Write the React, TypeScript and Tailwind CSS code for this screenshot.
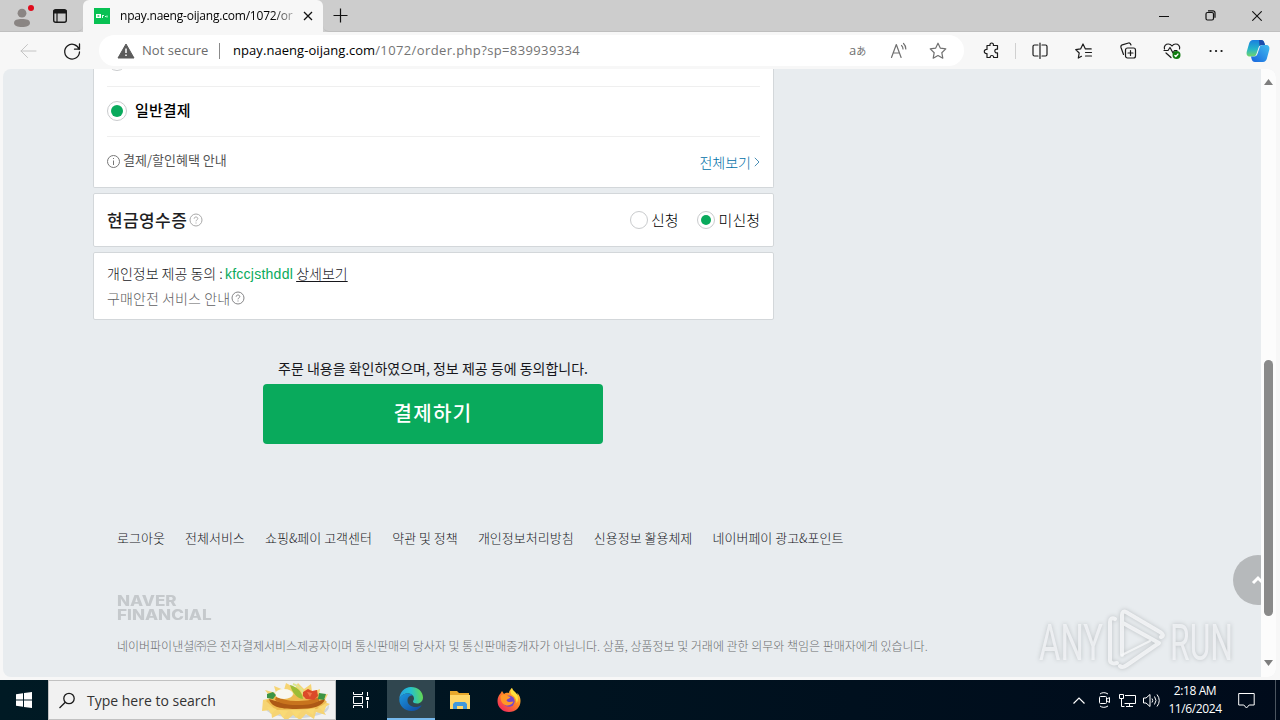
import type { ReactNode } from 'react';
import clsx from 'clsx';

const FOOTER_LINKS = [
  '로그아웃',
  '전체서비스',
  '쇼핑&페이 고객센터',
  '약관 및 정책',
  '개인정보처리방침',
  '신용정보 활용체제',
  '네이버페이 광고&포인트',
];

interface IconProps {
  children: ReactNode;
  className?: string;
  size?: number;
}

// 20-unit line icon, used by the browser chrome and the taskbar
function Icon({ children, className, size = 20 }: IconProps) {
  return (
    <svg
      width={size}
      height={size}
      viewBox="0 0 20 20"
      fill="none"
      stroke="currentColor"
      strokeWidth="1.2"
      strokeLinecap="round"
      strokeLinejoin="round"
      className={clsx('shrink-0', className)}
    >
      {children}
    </svg>
  );
}

function TabStrip() {
  return (
    <div className="flex h-8 bg-[#cdcdcd]">
      <div className="flex w-[83px] items-center rounded-br-md border-b border-[#bfbfbf] pl-3">
        <svg width="22" height="26" viewBox="0 0 22 26" className="shrink-0">
          <circle cx="10" cy="10.200" r="4.400" fill="#8a8583" />
          <path d="M2 20c0-3.200 3.500-4 8-4s8 .8 8 4c0 2.600-3.500 4-8 4s-8-1.400-8-4z" fill="#8a8583" />
          <circle cx="19" cy="5" r="3" fill="#e00b1c" />
        </svg>
        <Icon className="ml-4 text-[#1b1b1b]">
          <rect x="3.700" y="3.700" width="12.600" height="12.600" rx="2" strokeWidth="1.400" />
          <path d="M4 4.500h12v2.500H4z" fill="currentColor" />
          <path d="M7 7v9" />
        </Icon>
      </div>
      <div className="flex w-[240px] items-center rounded-t-md bg-[#f7f7f7] pl-[11px]">
        <div className="flex h-4 w-4 items-center justify-center bg-[#08c153]">
          <svg width="14" height="8" viewBox="0 0 14 8">
            <path d="M1 2h5v4H1z" fill="#fff" />
            <path d="M2.500 3.300h1.800v1.400H2.500z" fill="#08c153" />
            <path d="M7.500 3v3M7.500 3.500h1.500M10 4.500h1.200M12 3.500v2" stroke="#d8ffe6" />
          </svg>
        </div>
        <div className="ml-[10px] w-[173px] overflow-hidden whitespace-nowrap bg-gradient-to-r from-black from-88% to-black/30 bg-clip-text text-[12px] tracking-[-0.21px] text-transparent">
          npay.naeng-oijang.com/1072/or
        </div>
        <svg width="10" height="10" viewBox="0 0 10 10" className="ml-[10px]" stroke="#111" strokeWidth="1.300">
          <path d="M1 1l8 8M9 1l-8 8" />
        </svg>
      </div>
      <div className="flex flex-1 items-center rounded-bl-md border-b border-[#bfbfbf] pl-[10px]">
        <svg width="15" height="15" viewBox="0 0 15 15" stroke="#111" strokeWidth="1.200">
          <path d="M7.500 .5v14M.5 7.500h14" />
        </svg>
        <div className="ml-auto flex w-[121px] items-center justify-between pr-[18px]">
          <svg width="10" height="10" viewBox="0 0 10 10" stroke="#111">
            <path d="M0 5.500h10" />
          </svg>
          <svg width="11" height="11" viewBox="0 0 11 11" fill="none" stroke="#111" strokeWidth="1.200">
            <rect x="1" y="2.500" width="7.500" height="7.500" rx="1.500" />
            <path d="M3 .8h5a2 2 0 0 1 2 2v5" />
          </svg>
          <svg width="10" height="10" viewBox="0 0 10 10" stroke="#111" strokeWidth="1.100">
            <path d="M.3 .3l9.400 9.400M9.700 .3L.3 9.700" />
          </svg>
        </div>
      </div>
    </div>
  );
}

function CopilotIcon() {
  return (
    <svg width="24" height="22" viewBox="0 0 24 22" className="ml-5 shrink-0">
      <defs>
        <linearGradient id="copLeft" x1="0" y1="0" x2="0" y2="1">
          <stop offset="0" stopColor="#1a7fe0" />
          <stop offset=".55" stopColor="#25b5c9" />
          <stop offset="1" stopColor="#72d66a" />
        </linearGradient>
        <linearGradient id="copRight" x1="1" y1="0" x2="0" y2="1">
          <stop offset="0" stopColor="#41bdf0" />
          <stop offset="1" stopColor="#1763dd" />
        </linearGradient>
      </defs>
      <path d="M7 0h8c2 0 2.800 1 3.400 3l.6 2h-3c-2 0-3 1-3.600 3l-2 6c-.6 1.800-1.600 2.500-3.400 2.500H4C1.300 16.500 0 14.500 .8 11.500l2.300-8C3.800 1.200 5 0 7 0z" fill="url(#copLeft)" />
      <path d="M17 22H9c-2 0-2.800-1-3.400-3L5 16.500h3c2 0 3-1 3.600-3l2-6C14.200 5.700 15.200 5 17 5h3c2.700 0 4 2 3.200 5l-2.300 8.500c-.7 2.300-1.900 3.500-3.900 3.500z" fill="url(#copRight)" />
      <path d="M13 0h2c2 0 2.800 1 3.400 3l.6 2h-3c-1 0-1.800.3-2.500 1z" fill="#1c4bab" />
    </svg>
  );
}

function Toolbar() {
  return (
    <div className="flex h-[37px] items-center pl-[18px]">
      <Icon className="text-[#c4c4c4]">
        <path d="M18 10H3M9.500 3.500L3 10l6.500 6.500" strokeWidth="1" />
      </Icon>
      <Icon className="ml-6 text-[#1b1b1b]">
        <path d="M17.200 8.500A7.400 7.400 0 1 0 17.500 11M17.500 3v5.200h-5" strokeWidth="1.300" />
      </Icon>
      <div className="ml-[17px] flex h-[31px] w-[865px] items-center rounded-full bg-white pl-[18px] text-[13px]">
        <svg width="18" height="16" viewBox="0 0 18 16">
          <path d="M9 1l8 14H1z" fill="#5b5b5b" stroke="#5b5b5b" strokeLinejoin="round" />
          <path d="M9 5.500v4.500M9 11.500v1.500" stroke="#fff" strokeWidth="1.500" />
        </svg>
        <span className="ml-[7px] w-[67px] whitespace-nowrap tracking-[0.05px] text-[#6b6b6b]">Not secure</span>
        <span className="ml-[10px] h-4 w-px bg-[#8a8a8a]" />
        <span className="ml-[13px] whitespace-nowrap text-[#747474]">
          <span className="tracking-[0.06px] text-black">npay.naeng-oijang.com</span>
          <span className="tracking-[0.38px]">/1072/order.php?sp=839939334</span>
        </span>
        <div className="ml-auto flex items-center pr-[16px] text-[#707070]">
          <span className="w-[20px] whitespace-nowrap text-[13px] leading-none">
            a<span className="text-[10px]">あ</span>
          </span>
          <Icon className="ml-[20px]">
            <path d="M2.500 16.500l4.800-13 4.800 13M4.200 12h6.200" />
            <path d="M12.500 4.500c1 .8 1.500 2 1.500 3.500M14.500 2.500c1.600 1.500 2.300 3.300 2.300 5.500" />
          </Icon>
          <Icon className="ml-[19px]">
            <path d="M10 2.200l2.400 5 5.400.7-4 3.800 1 5.500-4.800-2.700-4.800 2.700 1-5.500-4-3.800 5.400-.7z" />
          </Icon>
        </div>
      </div>
      <div className="flex items-center text-[#1b1b1b]">
        <Icon className="ml-[18px]">
          <path d="M5 4.500h3c-.3-1.800.6-2.500 1.700-2.500s2 .7 1.700 2.500h4.100v3.700c-1.800-.3-2.700.6-2.700 1.800s.9 2.100 2.700 1.800v4.700h-3.800c0-1.400-.7-2-1.800-2s-1.800.6-1.800 2H5v-4c-1.800.2-2.700-.7-2.700-2s.9-2.200 2.700-2z" />
        </Icon>
        <span className="ml-[13px] h-4 w-px bg-[#d0d0d0]" />
        <Icon className="ml-[14px]">
          <path d="M8 4H4.500A1.500 1.500 0 0 0 3 5.500v8A1.500 1.500 0 0 0 4.500 15H8M12 4h3.500A1.500 1.500 0 0 1 17 5.500v8a1.500 1.500 0 0 1-1.500 1.500H12M10 2v15.500" />
        </Icon>
        <Icon className="ml-6">
          <path d="M7.500 15.300L4.300 17l.9-5-3.500-3.400 4.900-.7L9 3l2.400 4.900h5.800M11.500 11.500h6M11.500 15h6" />
        </Icon>
        <Icon className="ml-6">
          <rect x="7.500" y="7" width="10" height="10" rx="2" />
          <path d="M12.500 9.500v5M10 12h5M5.500 13.500L3 6.500C2.600 5 3 4.300 4.300 3.800L10.500 2c1.300-.3 2 .2 2.500 2" />
        </Icon>
        <Icon className="ml-6">
          <path d="M2.500 8C1.500 4.800 4 3 6.300 3c1.700 0 3 1 3.700 2 .7-1 2-2 3.700-2 2.300 0 4.800 1.800 3.800 5M2 9.500h4l2-3 3 5.500 1.500-2.500H15M4 12l5 4.500" />
          <circle cx="14.500" cy="14" r="4" fill="#107c10" stroke="none" />
          <path d="M12.800 14.500l1 1 2.200-2.500" stroke="#fff" />
        </Icon>
        <Icon className="ml-6">
          <path d="M4.500 10h.1M10 10h.1M15.500 10h.1" strokeWidth="2.200" />
        </Icon>
        <CopilotIcon />
      </div>
    </div>
  );
}

function Radio({ checked, large }: { checked?: boolean; large?: boolean }) {
  return (
    <span
      className={clsx(
        'flex shrink-0 items-center justify-center rounded-full border border-[#c9cbcd] bg-white',
        large ? 'h-5 w-5' : 'h-[18px] w-[18px]',
      )}
    >
      {checked && <span className={clsx('rounded-full bg-[#09aa5c]', large ? 'h-3 w-3' : 'h-[10px] w-[10px]')} />}
    </span>
  );
}

function HelpIcon({ className }: { className?: string }) {
  return (
    <svg width="14" height="14" viewBox="0 0 14 14" fill="none" className={clsx('shrink-0', className)} stroke="currentColor">
      <circle cx="7" cy="7" r="6" />
      <path d="M5.200 5.700C5.200 4.500 6 4 7 4s1.800.6 1.800 1.600C8.800 6.800 7 6.900 7 8.300M7 9.500v1" />
    </svg>
  );
}

function PaymentCard() {
  return (
    <section className="h-[119px] rounded-b-[2px] border border-t-0 border-[#d3d7da] bg-white px-[13px]">
      <div className="h-[18px] overflow-hidden border-b border-[#efefef]">
        <div className="-mt-[18px]">
          <Radio large />
        </div>
      </div>
      <div className="flex h-[50px] items-center border-b border-[#efefef] pb-[2px]">
        <Radio checked large />
        <span className="ml-2 text-[15px] font-medium tracking-[0.1px] text-black">일반결제</span>
      </div>
      <div className="flex h-[49px] items-center pb-[2px]">
        <svg width="13" height="13" viewBox="0 0 13 13" fill="none" stroke="#777" className="mt-px">
          <circle cx="6.500" cy="6.500" r="6" />
          <path d="M6.500 5.500v4.500M6.500 3v1" />
        </svg>
        <span className="-mt-px ml-[3px] text-[13px] text-[#555]">결제/할인혜택 안내</span>
        <span className="ml-auto mt-[3px] text-[14px] font-light text-[#0070a8]">전체보기</span>
        <svg width="6" height="10" viewBox="0 0 6 10" fill="none" stroke="#4c8fb5" className="ml-[3px] mt-[2px]">
          <path d="M.8 .8L5 5 .8 9.200" />
        </svg>
      </div>
    </section>
  );
}

function ReceiptCard() {
  return (
    <section className="mt-[5px] flex h-[54px] items-center rounded-[2px] border border-[#d3d7da] bg-white px-[13px]">
      <h2 className="text-[17px] font-medium tracking-[0.4px] text-[#1e1e23]">현금영수증</h2>
      <HelpIcon className="ml-[2px] text-[#a9a9a9]" />
      <div className="ml-auto flex items-center text-[15px] font-light text-black">
        <Radio />
        <span className="ml-[3px]">신청</span>
        <span className="ml-[18px]">
          <Radio checked />
        </span>
        <span className="ml-1">미신청</span>
      </div>
    </section>
  );
}

function ConsentCard() {
  return (
    <section className="mt-[5px] h-[68px] rounded-[2px] border border-[#d3d7da] bg-white px-[13px] pt-[8px] text-[14px] font-light leading-6">
      <p className="whitespace-nowrap text-[#17171c]">
        개인정보 제공 동의 : <span className="-ml-px font-['Liberation_Sans'] tracking-[0.25px] text-[#09aa5c]">kfccjsthddl</span>{' '}
        <span className="underline underline-offset-2">상세보기</span>
      </p>
      <p className="flex items-center tracking-[0.1px] text-[#606062]">
        구매안전 서비스 안내
        <HelpIcon className="ml-px text-[#858587]" />
      </p>
    </section>
  );
}

function Watermark() {
  return (
    <svg width="200" height="68" viewBox="0 0 200 68" className="absolute bottom-[2px] right-[40px] drop-shadow-[0_0_2px_#aeb3b6]">
      <g fill="#f5f7f9" fillOpacity=".75" fontFamily="Roboto" fontSize="50">
        <text x="3" y="53" textLength="64" lengthAdjust="spacingAndGlyphs">ANY</text>
        <text x="134" y="53" textLength="63" lengthAdjust="spacingAndGlyphs">RUN</text>
      </g>
      <g fill="none" stroke="#f7f9fa" strokeOpacity=".8" strokeLinecap="round" strokeLinejoin="round">
        <path d="M79 12c-3-2-5 0-5 3v38c0 3 3 4 7 3" strokeWidth="4" />
        <path d="M86 48V8c0-3 2-4 4-3l34 20c3 2 4 4 1 5M87 16l36 20-32 22c-3 2-5 3-7 1" strokeWidth="4" />
        <path d="M86 48l28-14" strokeWidth="2" />
      </g>
    </svg>
  );
}

function OrderPage() {
  return (
    <div className="relative ml-[3px] flex h-[608px] w-[1273px] overflow-hidden rounded-lg bg-[#e8ecef]">
      <main className="w-[1258px] pl-[90px]">
        <div className="w-[681px]">
          <PaymentCard />
          <ReceiptCard />
          <ConsentCard />
          <div className="flex w-[680px] flex-col items-center pt-[37px]">
            <p className="whitespace-nowrap text-[14px] leading-[22px] text-[#17171c]">
              주문 내용을 확인하였으며, 정보 제공 등에 동의합니다.
            </p>
            <button className="mt-[5px] h-[60px] w-[340px] rounded-[4px] bg-[#09aa5c] pb-[3px] text-[20px] font-medium tracking-[1.3px] text-white">
              결제하기
            </button>
          </div>
        </div>
        <footer className="pl-6 pt-[84px]">
          <nav className="flex gap-[20.2px] whitespace-nowrap text-[13px] font-light leading-5 text-[#17171c]">
            {FOOTER_LINKS.map((label) => (
              <a key={label}>{label}</a>
            ))}
          </nav>
          <div className="mt-[46px] w-[79px] origin-left scale-x-[1.22] whitespace-nowrap font-['Inter'] text-[14px] font-extrabold leading-[14px] text-[#c5c9cc]">
            <div>NAVER</div>
            <div>FINANCIAL</div>
          </div>
          <p className="mt-[14px] whitespace-nowrap text-[12px] font-light leading-5 tracking-[-0.01px] text-[#6c6e70]">
            네이버파이낸셜㈜은 전자결제서비스제공자이며 통신판매의 당사자 및 통신판매중개자가 아닙니다. 상품, 상품정보 및 거래에 관한 의무와 책임은 판매자에게 있습니다.
          </p>
        </footer>
      </main>

      {/* floating scroll-to-top button, cut off by the scrollbar */}
      <div className="absolute right-[15px] top-[486px] h-[50px] w-7 overflow-hidden">
        <div className="flex h-[50px] w-[50px] items-center justify-center rounded-full bg-[#b6b9bb]">
          <svg width="16" height="10" viewBox="0 0 16 10" fill="none" stroke="#fff" strokeWidth="3">
            <path d="M3 8l5-5 5 5" />
          </svg>
        </div>
      </div>
      <Watermark />

      <div className="flex w-[15px] flex-col items-center bg-[#fcfcfc] pt-[10px]">
        <svg width="9" height="6" viewBox="0 0 9 6">
          <path d="M4.500 0L9 6H0z" fill="#7e7e7e" />
        </svg>
        <div className="mt-[275px] h-[256px] w-[9px] rounded-full bg-[#8a8a8a]" />
        <svg width="9" height="6" viewBox="0 0 9 6" className="mt-[44px]">
          <path d="M4.500 6L0 0h9z" fill="#7e7e7e" />
        </svg>
      </div>
    </div>
  );
}

function NachosArt() {
  return (
    <svg width="70" height="38" viewBox="0 0 70 38" className="ml-auto mr-[3px] shrink-0">
      <ellipse cx="35" cy="26" rx="32" ry="11" fill="#cfd6dc" />
      <ellipse cx="35" cy="24" rx="31" ry="10" fill="#e9edf0" />
      <path d="M1 19l8-2-6-8 11 3-2-7 10 4 2-7 9 5 3-5 6 6 7-5 1 8 8-3-1 7 9-2-4 8 6 2-8 5 4 6-10-3-2 7-8-5-6 6-7-5-7 6-6-7-8 4-1-8-9 1z" fill="#f6d473" />
      <path d="M4 20l9-6 44-1 8 8-10 7-41 1z" fill="#eebb50" />
      <path d="M7 18c9 3 15 4 26 4s20 0 30-4c-2 7-11 10-29 10S9 25 7 18z" fill="#ad5915" />
      <path d="M14 16c6 2 12 4 20 4s17-1 23-4v4c-7 4-14 4-23 4s-17-2-21-5z" fill="#c8731d" />
      <ellipse cx="22" cy="13" rx="9" ry="5" fill="#f8f7ef" />
      <path d="M28 4c7 2 12 6 13 14-7-1-11-7-13-14z" fill="#9cbc36" />
      <path d="M31 3c7 2 11 7 12 14" stroke="#dbe58d" fill="none" strokeWidth="2" />
      <path d="M41 11l5-3 4 2 5-1 1 6-4 4-8-1-3-3z" fill="#dc4a29" />
      <path d="M45 11l5 1-2 4z" fill="#f27848" />
      <path d="M5 13l6-2 3 3-3 4-6-1zM57 12l7 1-2 6-6-1z" fill="#3d9445" />
      <path d="M5 26l10 2-6 5zM17 29l9 1-5 7zM29 29l10 1-5 7zM43 29l10-2-2 7zM56 26l9-3-3 8z" fill="#f9da75" />
    </svg>
  );
}

function EdgeIcon() {
  return (
    <svg width="24" height="24" viewBox="0 0 24 24">
      <defs>
        <linearGradient id="edgeTop" x1="0" y1=".5" x2="1" y2=".4">
          <stop offset="0" stopColor="#289ee2" />
          <stop offset=".5" stopColor="#24c1cf" />
          <stop offset="1" stopColor="#65d94d" />
        </linearGradient>
        <linearGradient id="edgeBottom" x1="0" y1="0" x2="1" y2="1">
          <stop offset="0" stopColor="#1b98e0" />
          <stop offset="1" stopColor="#11469c" />
        </linearGradient>
      </defs>
      <path d="M.3 12C.6 5 5.500 0 12 0c7 0 12 4.800 12 10.500 0 3.500-2.600 6-5.800 6-2.700 0-4.200-1-4.200-2 0-.8 1-1.200 1-3C15 8.500 12.200 6.500 8.500 6.500 4.500 6.500 1.300 9 .3 12z" fill="url(#edgeTop)" />
      <path d="M.3 12C1.300 9 4.500 6.500 8.500 6.500c2.500 0 4.500.9 5.600 2.200-3-.5-5.600 1.500-5.600 4.800 0 4 3.700 6.500 8 6.500 2 0 4-.6 5.500-1.500.4-.2.700 0 .4.500C20.300 22 16.800 24 12.500 24 5.500 24 0 18.800.3 12z" fill="url(#edgeBottom)" />
    </svg>
  );
}

function FirefoxIcon() {
  return (
    <svg width="24" height="24" viewBox="0 0 24 24">
      <defs>
        <linearGradient id="fox" x1="1" y1="0" x2=".2" y2="1">
          <stop offset="0" stopColor="#fff044" />
          <stop offset=".45" stopColor="#ff8b24" />
          <stop offset="1" stopColor="#f2255d" />
        </linearGradient>
      </defs>
      <path d="M3.500 5.500L5 3l2 3c1-1 3-1.500 5-1 0-2 1.500-4 3-5 .5 3 4 4 5.300 7.200L20.500 5c2 2.500 3 5 3 8C23.500 19.500 18.500 24 12 24S.5 19.300.5 13c0-3 1-5.500 3-7.500z" fill="url(#fox)" />
      <circle cx="12" cy="13.200" r="5.600" fill="#7447cc" />
      <path d="M3.500 8c2-2 5-2 7 0l3 1c-1 2-3.500 1.500-4 3.500 2 2.500 5 1 7 1-1 3-5 5-8.500 3.500C4.500 15.500 3.500 12 3.500 8z" fill="#ff9827" />
      <path d="M15 0c.5 3 4 4 5.300 7.200 1.200 3 .7 6-.8 8 .3-4-2-7-5-8.700C13 4 14 1 15 0z" fill="#ffe03c" />
    </svg>
  );
}

function Taskbar() {
  return (
    <div className="flex h-10 bg-gradient-to-r from-[#001a24] to-[#000b1b] text-white">
      <div className="flex w-12 items-center justify-center">
        <svg width="16" height="16" viewBox="0 0 16 16" fill="#fff">
          <path d="M0 2.300l7-1v6.200H0zM8 1.100L16 0v7.500H8zM0 8.500h7v6.200l-7-1zM8 8.500h8V16l-8-1.100z" />
        </svg>
      </div>
      <div className="flex w-[288px] items-center border border-[#c1c1c1] bg-[#f1f1f1] pl-[10px]">
        <svg width="16" height="17" viewBox="0 0 16 17" fill="none" stroke="#1a1a1a" strokeWidth="1.300">
          <circle cx="10" cy="6.500" r="5.200" />
          <path d="M6.300 10.300L.5 16" />
        </svg>
        <span className="ml-[12px] whitespace-nowrap text-[14px] text-[#333]">Type here to search</span>
        <NachosArt />
      </div>
      <div className="flex w-[49px] items-center justify-center">
        <svg width="18" height="16" viewBox="0 0 18 16" fill="none" stroke="#fff">
          <path d="M1.500 0v2.500h9V0M1.500 16v-2.500h9V16M1.500 4.500h9v7h-9zM15.500 0v4M15.500 9v7" />
          <path d="M14 5h3v3h-3z" fill="#fff" stroke="none" />
        </svg>
      </div>
      <div className="ml-[2px] flex w-12 items-center justify-center border-b-2 border-[#76b9ed] bg-[#30464f]">
        <EdgeIcon />
      </div>
      <div className="flex w-[49px] items-center justify-center">
        <svg width="22" height="19" viewBox="0 0 22 19">
          <path d="M1 0h7l2 2h10v15H1z" fill="#e8a92c" />
          <path d="M1 4h20v14H1z" fill="#ffd768" />
          <path d="M4 18v-5l2-2h10l2 2v5h-4v-3H8v3z" fill="#4298d9" />
        </svg>
      </div>
      <div className="flex w-[50px] items-center justify-center">
        <FirefoxIcon />
      </div>

      <div className="ml-auto flex items-center">
        <svg width="12" height="7" viewBox="0 0 12 7" fill="none" stroke="#fff" strokeWidth="1.200">
          <path d="M.5 6.500L6 1l5.500 5.500" />
        </svg>
        <svg width="13" height="16" viewBox="0 0 13 16" fill="none" stroke="#fff" className="ml-[13px]">
          <rect x="1.500" y="4.500" width="7" height="7" rx="1" />
          <path d="M9 7l2.500-1.500v5L9 9M2 2C4 .2 7.500 .2 10 2M2 14c2 1.800 5.500 1.800 8 0" />
        </svg>
        <svg width="17" height="15" viewBox="0 0 17 15" fill="none" stroke="#fff" className="ml-[8px]">
          <path d="M6 2.500h10.500v8h-11M10.500 10.500v3M7 13.500h7M.5 1.500h4v4h-4zM2.500 5.500v8h3" />
        </svg>
        <svg width="18" height="15" viewBox="0 0 18 15" fill="none" stroke="#fff" className="ml-[7px]">
          <path d="M.5 5h2.500l4-3.500v12L3 10H.5zM9 5.500q1.500 2 0 4M11.500 3.500q3 4 0 8M14 1.500q4.500 6 0 12" />
        </svg>
        <div className="ml-[6px] w-[56px] text-center text-[12px] leading-[18px] tracking-[-0.4px]">
          <div>2:18 AM</div>
          <div>11/6/2024</div>
        </div>
        <svg width="17" height="17" viewBox="0 0 17 17" fill="none" stroke="#fff" className="ml-[15px]">
          <path d="M.7 1.500h15.500v11.500h-5l-2.700 3-2.700-3H.7z" />
        </svg>
        <span className="ml-[20px] mr-[4px] h-10 w-px bg-[#4b5560]" />
      </div>
    </div>
  );
}

export default function App() {
  return (
    <div className="h-[720px] w-[1280px] overflow-hidden bg-[#f7f7f7] font-['Open_Sans','Noto_Sans_CJK_KR',sans-serif]">
      <TabStrip />
      <Toolbar />
      <div className="h-[611px] font-['Noto_Sans_CJK_KR',sans-serif]">
        <OrderPage />
      </div>
      <Taskbar />
    </div>
  );
}
